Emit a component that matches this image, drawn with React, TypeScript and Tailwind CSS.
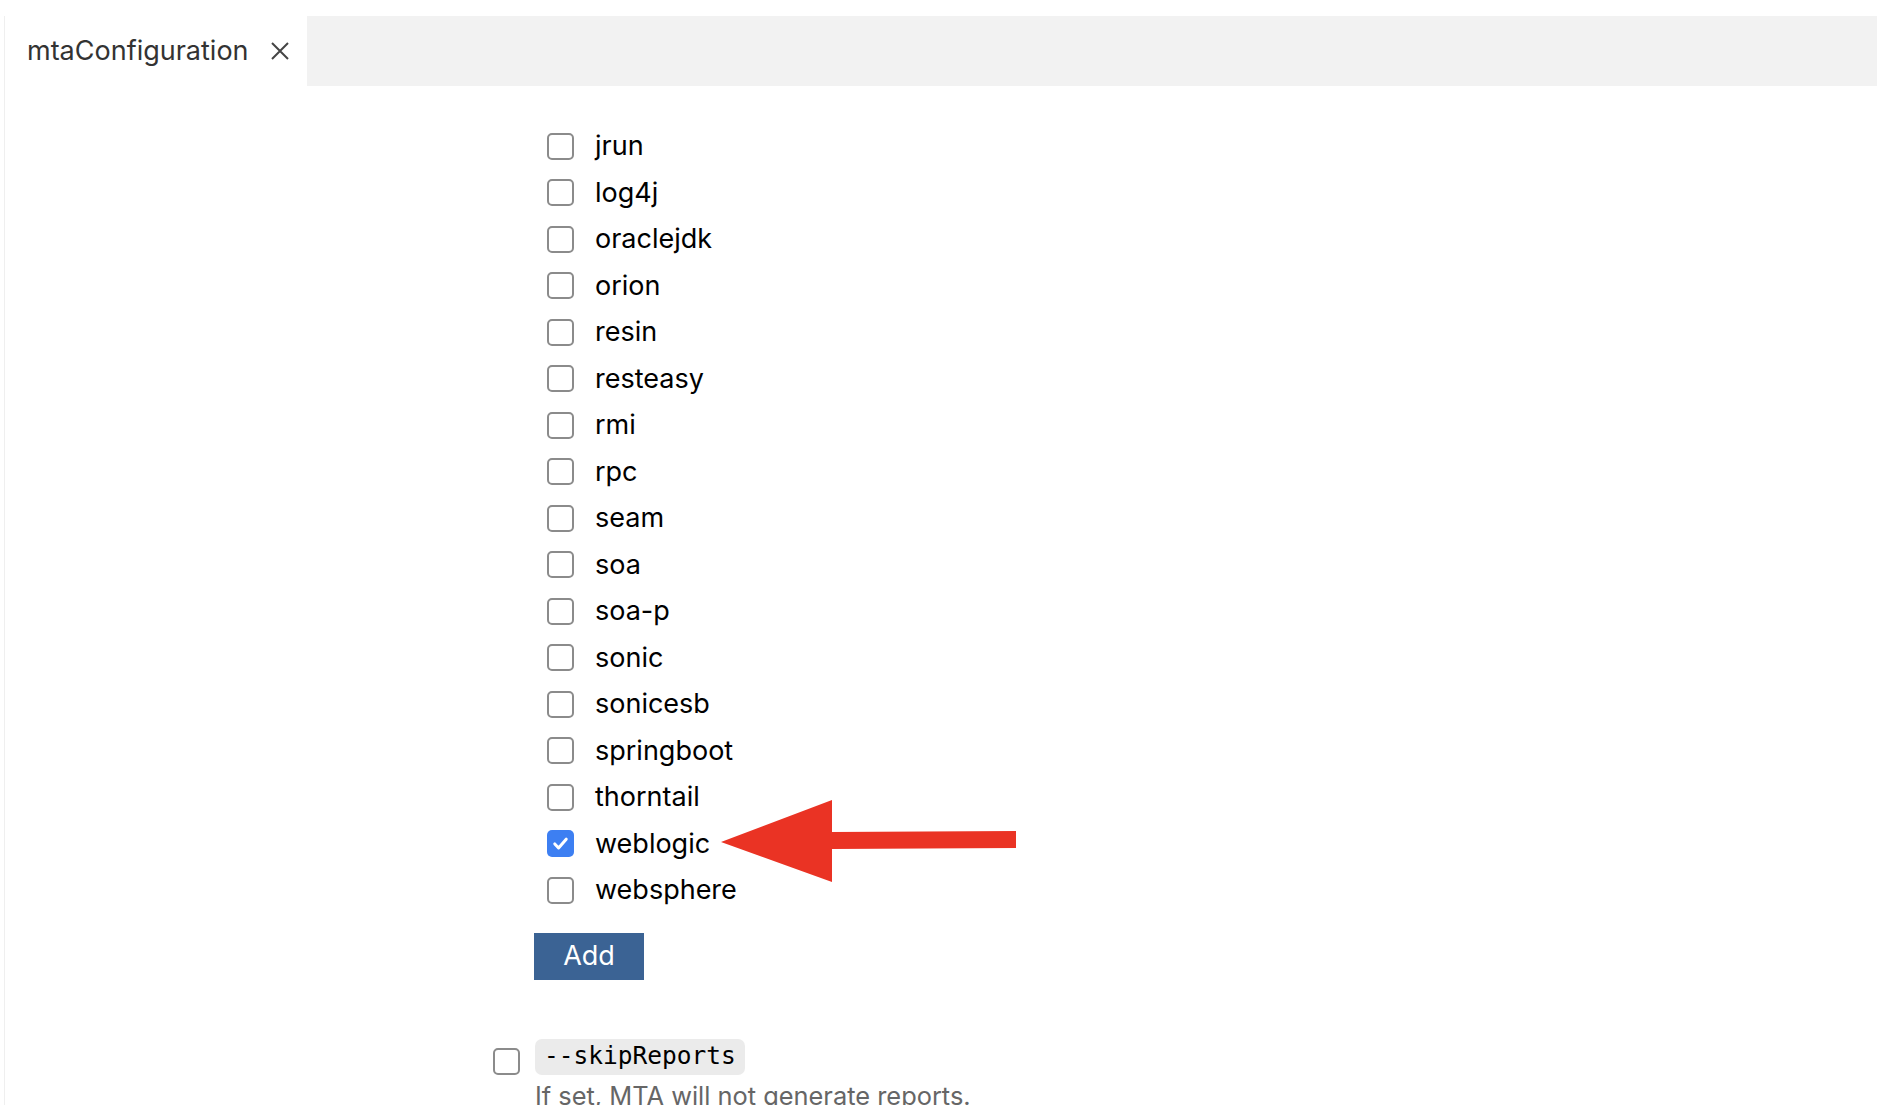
import React from "react";

const items = [
  "jrun",
  "log4j",
  "oraclejdk",
  "orion",
  "resin",
  "resteasy",
  "rmi",
  "rpc",
  "seam",
  "soa",
  "soa-p",
  "sonic",
  "sonicesb",
  "springboot",
  "thorntail",
  "weblogic",
  "websphere",
];

function Box({ checked }: { checked?: boolean }) {
  if (checked) {
    return (
      <span className="w-[27px] h-[27px] rounded-[5px] bg-[#3d7ff2] flex items-center justify-center shrink-0">
        <svg width="19" height="19" viewBox="0 0 20 20" fill="none">
          <path d="M4 10.5l4 4.2L16 5.5" stroke="white" strokeWidth="3.2" strokeLinecap="round" strokeLinejoin="round" />
        </svg>
      </span>
    );
  }
  return <span className="block w-[27px] h-[27px] rounded-[5px] border-2 border-[#8b8b8b] bg-white shrink-0" />;
}

export default function App() {
  return (
    <div className="w-[1884px] h-[1116px] bg-white overflow-hidden relative font-['Inter',sans-serif]">
      <div className="ml-[4px] mt-[16px] w-[1873px] h-[1089px] border-l border-[#efefef] flex flex-col">
        <div className="h-[70px] flex shrink-0">
          <div className="w-[302px] bg-white flex items-center pl-[22px] text-[#333] text-[27px]">
            <span>mtaConfiguration</span>
            <svg className="ml-[21px]" width="20" height="20" viewBox="0 0 20 20">
              <path d="M2 2L18 18M18 2L2 18" stroke="#444" strokeWidth="2" />
            </svg>
          </div>
          <div className="flex-1 bg-[#f2f2f2]" />
        </div>

        <div className="flex-1 overflow-hidden relative">
          <div className="pt-[37px] pl-[542px]">
            {items.map((it) => (
              <div key={it} className="h-[46.5px] flex items-center gap-[21px] text-[27px] text-black">
                <Box checked={it === "weblogic"} />
                <span>{it}</span>
              </div>
            ))}
          </div>

          <div className="pl-[529px] mt-[19px]">
            <button className="w-[110px] h-[47px] bg-[#3b6394] text-white text-[27px]">Add</button>
          </div>

          <div className="pl-[488px] mt-[59px] flex gap-[15px]">
            <div className="pt-[9px]">
              <Box />
            </div>
            <div>
              <div className="inline-flex items-center h-[36px] px-[9px] bg-[#ebebeb] rounded-[7px] font-['DejaVu_Sans_Mono',monospace] text-[24.5px] text-black">
                --skipReports
              </div>
              <div className="mt-[5px] text-[25.4px] text-[#666] leading-[32px]">If set, MTA will not generate reports.</div>
            </div>
          </div>

          <svg className="absolute left-[716px] top-[714px]" width="300" height="84" viewBox="0 0 300 84">
            <path d="M0 42 L111 0 L111 32 L295 31 L295 48 L111 49 L111 82 Z" fill="#ea3324" />
          </svg>
        </div>
      </div>
    </div>
  );
}
